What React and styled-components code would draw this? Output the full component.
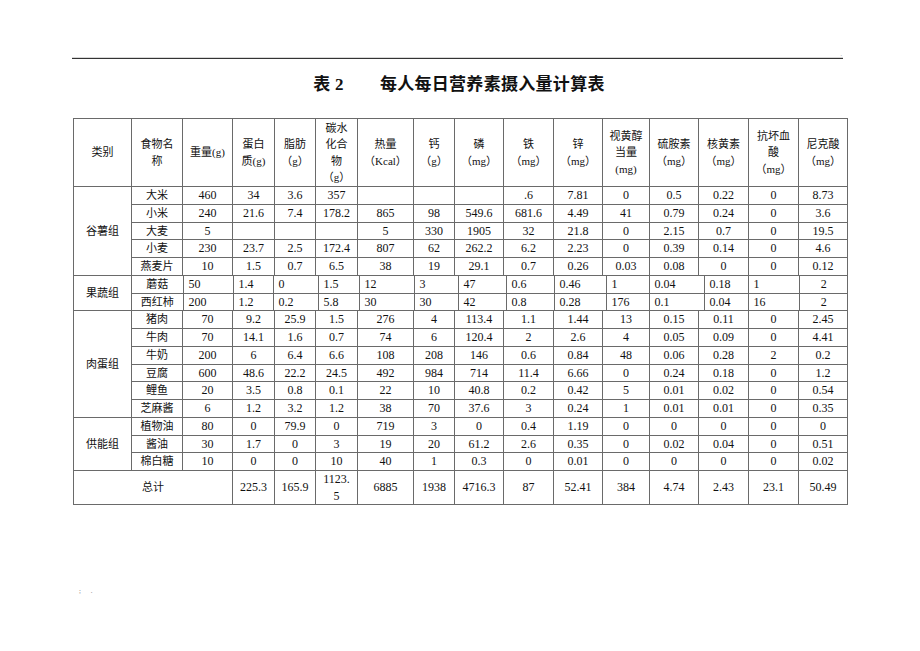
import React from "react";
import styled, { createGlobalStyle } from "styled-components";

const Global = createGlobalStyle`
  html, body { margin: 0; padding: 0; background: #fff; }
  body { font-family: "Liberation Serif", "Noto Sans CJK SC", serif; color: #111; }
`;

const Page = styled.div`
  width: 774px;
  margin-left: 72px;
  padding-top: 48px;
`;

const TopMark = styled.div`
  height: 9px;
  display: flex;
  justify-content: flex-end;
  align-items: flex-end;
  padding-right: 4px;
  font-size: 6px;
  line-height: 6px;
  color: #999;
`;

const Rule = styled.div`
  width: 771px;
  height: 0;
  border-top: 1px solid #d8d8d8;
  border-bottom: 1.5px solid #333;
`;

const Title = styled.h1`
  margin: 15px 0 0;
  height: 44px;
  text-align: center;
  font-family: "Liberation Serif", "Noto Sans CJK SC", serif;
  font-weight: bold;
  font-size: 17px;
  line-height: 22px;
  color: #111;
  letter-spacing: 0.3px;
`;

const TitleName = styled.span`
  margin-left: 36px;
`;

const Table = styled.table`
  border-collapse: collapse;
  table-layout: fixed;
  width: 775px;
  margin-left: 1px;
`;

const Cell = styled.td`
  border: 1px solid #6a6a6a;
  padding: 0;
  text-align: center;
  vertical-align: middle;
  font-size: ${(p) => (p.$cjk ? "11px" : "12px")};
  line-height: 16.5px;
  height: ${(p) => p.$h || "16.75px"};
  white-space: nowrap;
  overflow: hidden;
`;

const HeadCell = styled(Cell)`
  height: 67px;
  font-size: 11px;
`;

const NestCell = styled.td`
  border: 1px solid #6a6a6a;
  padding: 0;
  height: 34.5px;
`;

const Inner = styled.table`
  border-collapse: collapse;
  table-layout: fixed;
  width: 100%;
  height: 100%;
`;

const InnerCell = styled.td`
  padding: 0;
  border-left: 1px solid #6a6a6a;
  border-top: ${(p) => (p.$second ? "1px solid #6a6a6a" : "none")};
  &:first-child { border-left: none; }
  text-align: ${(p) => (p.$left ? "left" : "center")};
  padding-left: ${(p) => (p.$left ? "5px" : "0")};
  font-size: ${(p) => (p.$cjk ? "11px" : "12px")};
  line-height: 16px;
  height: 16.75px;
  white-space: nowrap;
  overflow: hidden;
  vertical-align: middle;
`;

const Footer = styled.div`
  margin-top: 82px;
  padding-left: 7px;
  font-size: 7px;
  color: #777;
  letter-spacing: 4px;
`;

const colW = [58, 51, 50, 42, 41, 42, 56, 41, 49, 50, 49, 47, 49, 50, 50, 49];
const fruitW = [51, 50, 40, 45, 41, 55, 44, 48, 48, 52, 43, 55, 44, 51, 49];

const headers = [
  ["类别"],
  ["食物名", "称"],
  ["重量(g)"],
  ["蛋白", "质(g)"],
  ["脂肪", "（g）"],
  ["碳水", "化合", "物", "（g）"],
  ["热量", "（Kcal）"],
  ["钙", "（g）"],
  ["磷", "（mg）"],
  ["铁", "（mg）"],
  ["锌", "（mg）"],
  ["视黄醇", "当量", "(mg)"],
  ["硫胺素", "（mg）"],
  ["核黄素", "（mg）"],
  ["抗坏血", "酸", "（mg）"],
  ["尼克酸", "（mg）"],
];

const groups = [
  {
    name: "谷薯组",
    rows: [
      ["大米", "460", "34", "3.6", "357", "", "", "", ".6", "7.81", "0", "0.5", "0.22", "0", "8.73"],
      ["小米", "240", "21.6", "7.4", "178.2", "865", "98", "549.6", "681.6", "4.49", "41", "0.79", "0.24", "0", "3.6"],
      ["大麦", "5", "", "", "", "5", "330", "1905", "32", "21.8", "0", "2.15", "0.7", "0", "19.5"],
      ["小麦", "230", "23.7", "2.5", "172.4", "807", "62", "262.2", "6.2", "2.23", "0", "0.39", "0.14", "0", "4.6"],
      ["燕麦片", "10", "1.5", "0.7", "6.5", "38", "19", "29.1", "0.7", "0.26", "0.03", "0.08", "0", "0", "0.12"],
    ],
  },
  {
    name: "果蔬组",
    nested: true,
    rows: [
      ["蘑菇", "50", "1.4", "0", "1.5", "12", "3", "47", "0.6", "0.46", "1", "0.04", "0.18", "1", "2"],
      ["西红柿", "200", "1.2", "0.2", "5.8", "30", "30", "42", "0.8", "0.28", "176", "0.1", "0.04", "16", "2"],
    ],
  },
  {
    name: "肉蛋组",
    rows: [
      ["猪肉", "70", "9.2", "25.9", "1.5", "276", "4", "113.4", "1.1", "1.44", "13", "0.15", "0.11", "0", "2.45"],
      ["牛肉", "70", "14.1", "1.6", "0.7", "74", "6", "120.4", "2", "2.6", "4", "0.05", "0.09", "0", "4.41"],
      ["牛奶", "200", "6", "6.4", "6.6", "108", "208", "146", "0.6", "0.84", "48", "0.06", "0.28", "2", "0.2"],
      ["豆腐", "600", "48.6", "22.2", "24.5", "492", "984", "714", "11.4", "6.66", "0", "0.24", "0.18", "0", "1.2"],
      ["鲤鱼", "20", "3.5", "0.8", "0.1", "22", "10", "40.8", "0.2", "0.42", "5", "0.01", "0.02", "0", "0.54"],
      ["芝麻酱", "6", "1.2", "3.2", "1.2", "38", "70", "37.6", "3", "0.24", "1", "0.01", "0.01", "0", "0.35"],
    ],
  },
  {
    name: "供能组",
    rows: [
      ["植物油", "80", "0", "79.9", "0", "719", "3", "0", "0.4", "1.19", "0", "0", "0", "0", "0"],
      ["酱油", "30", "1.7", "0", "3", "19", "20", "61.2", "2.6", "0.35", "0", "0.02", "0.04", "0", "0.51"],
      ["棉白糖", "10", "0", "0", "10", "40", "1", "0.3", "0", "0.01", "0", "0", "0", "0", "0.02"],
    ],
  },
];

const totals = ["225.3", "165.9", ["1123.", "5"], "6885", "1938", "4716.3", "87", "52.41", "384", "4.74", "2.43", "23.1", "50.49"];

const Lines = ({ lines }) =>
  lines.map((l, i) => (
    <React.Fragment key={i}>
      {i > 0 && <br />}
      {l}
    </React.Fragment>
  ));

function FruitGroup({ group }) {
  return (
    <tr>
      <Cell $cjk>{group.name}</Cell>
      <NestCell colSpan={15}>
        <Inner>
          <colgroup>
            {fruitW.map((w, i) => (
              <col key={i} style={{ width: w }} />
            ))}
          </colgroup>
          <tbody>
            {group.rows.map((r, ri) => (
              <tr key={ri}>
                {r.map((v, ci) => (
                  <InnerCell
                    key={ci}
                    $second={ri > 0}
                    $cjk={ci === 0}
                    $left={ci > 0 && ci < r.length - 1}
                  >
                    {v}
                  </InnerCell>
                ))}
              </tr>
            ))}
          </tbody>
        </Inner>
      </NestCell>
    </tr>
  );
}

export default function App() {
  return (
    <>
      <Global />
      <Page>
        <TopMark>.</TopMark>
        <Rule />
        <Title>
          表 2<TitleName>每人每日营养素摄入量计算表</TitleName>
        </Title>
        <Table>
          <colgroup>
            {colW.map((w, i) => (
              <col key={i} style={{ width: w }} />
            ))}
          </colgroup>
          <tbody>
            <tr>
              {headers.map((h, i) => (
                <HeadCell key={i}>
                  <Lines lines={h} />
                </HeadCell>
              ))}
            </tr>
            {groups.map((g) =>
              g.nested ? (
                <FruitGroup key={g.name} group={g} />
              ) : (
                g.rows.map((r, ri) => (
                  <tr key={g.name + ri}>
                    {ri === 0 && (
                      <Cell $cjk rowSpan={g.rows.length}>
                        {g.name}
                      </Cell>
                    )}
                    {r.map((v, ci) => (
                      <Cell key={ci} $cjk={ci === 0}>
                        {v}
                      </Cell>
                    ))}
                  </tr>
                ))
              )
            )}
            <tr>
              <Cell $cjk colSpan={3} $h="32px">
                总计
              </Cell>
              {totals.map((t, i) => (
                <Cell key={i} $h="32px">
                  {Array.isArray(t) ? <Lines lines={t} /> : t}
                </Cell>
              ))}
            </tr>
          </tbody>
        </Table>
        <Footer>; .</Footer>
      </Page>
    </>
  );
}
